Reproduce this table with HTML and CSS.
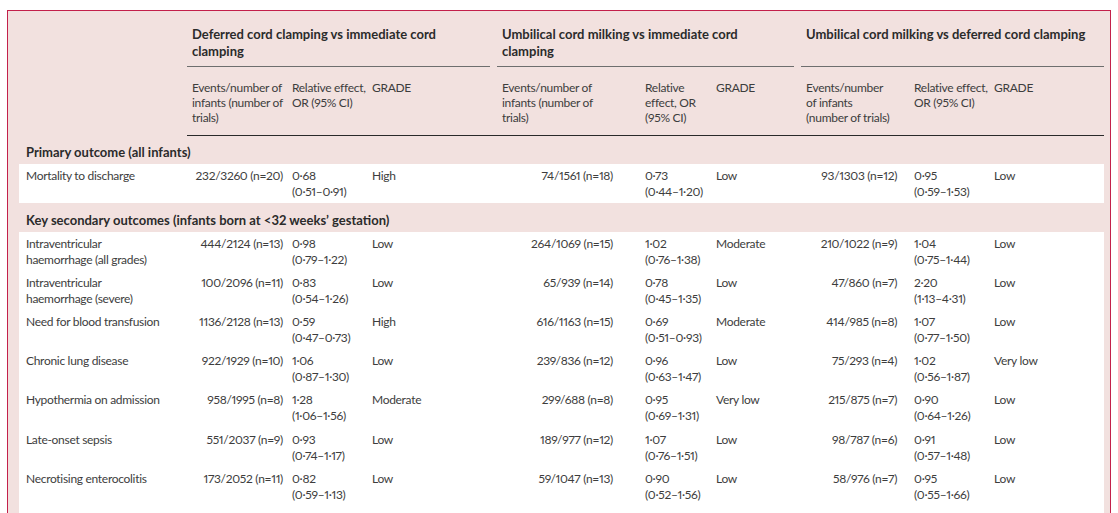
FILE: index.html
```html
<!DOCTYPE html>
<html lang="en">
<head>
<meta charset="utf-8">
<title>Cord management outcomes</title>
<link rel="stylesheet" href="styles.css">
</head>
<body>
<div class="frame">
<table class="tbl">
<colgroup>
<col class="c-label"><col class="c-g1e"><col class="c-g1r"><col class="c-g1g">
<col class="c-g2e"><col class="c-g2r"><col class="c-g2g">
<col class="c-g3e"><col class="c-g3r"><col class="c-g3g">
</colgroup>
<thead>
<tr class="grp-row">
<th rowspan="2" class="blank"></th>
<th colspan="3" class="grp"><div class="grp-title">Deferred cord clamping vs immediate cord<br>clamping</div></th>
<th colspan="3" class="grp"><div class="grp-title">Umbilical cord milking vs immediate cord<br>clamping</div></th>
<th colspan="3" class="grp grp-last"><div class="grp-title">Umbilical cord milking vs deferred cord clamping<br>&nbsp;</div></th>
</tr>
<tr class="sub-row">
<th>Events/number of<br>infants (number of<br>trials)</th>
<th>Relative effect,<br>OR (95% CI)</th>
<th>GRADE</th>
<th>Events/number of<br>infants (number of<br>trials)</th>
<th>Relative<br>effect, OR<br>(95% CI)</th>
<th>GRADE</th>
<th>Events/number<br>of infants<br>(number of trials)</th>
<th>Relative effect,<br>OR (95% CI)</th>
<th>GRADE</th>
</tr>
</thead>
<tbody>
<tr class="sec"><td colspan="10">Primary outcome (all infants)</td></tr>
<tr class="row">
<td class="lbl">Mortality to discharge</td>
<td class="n1">232/3260 (n=20)</td><td>0·68<br>(0·51–0·91)</td><td>High</td>
<td class="n2">74/1561 (n=18)</td><td>0·73<br>(0·44–1·20)</td><td>Low</td>
<td class="n3">93/1303 (n=12)</td><td>0·95<br>(0·59–1·53)</td><td>Low</td>
</tr>
<tr class="sec sec-2"><td colspan="10">Key secondary outcomes (infants born at &lt;32 weeks’ gestation)</td></tr>
<tr class="row">
<td class="lbl">Intraventricular<br>haemorrhage (all grades)</td>
<td class="n1">444/2124 (n=13)</td><td>0·98<br>(0·79–1·22)</td><td>Low</td>
<td class="n2">264/1069 (n=15)</td><td>1·02<br>(0·76–1·38)</td><td>Moderate</td>
<td class="n3">210/1022 (n=9)</td><td>1·04<br>(0·75–1·44)</td><td>Low</td>
</tr>
<tr class="row">
<td class="lbl">Intraventricular<br>haemorrhage (severe)</td>
<td class="n1">100/2096 (n=11)</td><td>0·83<br>(0·54–1·26)</td><td>Low</td>
<td class="n2">65/939 (n=14)</td><td>0·78<br>(0·45–1·35)</td><td>Low</td>
<td class="n3">47/860 (n=7)</td><td>2·20<br>(1·13–4·31)</td><td>Low</td>
</tr>
<tr class="row">
<td class="lbl">Need for blood transfusion</td>
<td class="n1">1136/2128 (n=13)</td><td>0·59<br>(0·47–0·73)</td><td>High</td>
<td class="n2">616/1163 (n=15)</td><td>0·69<br>(0·51–0·93)</td><td>Moderate</td>
<td class="n3">414/985 (n=8)</td><td>1·07<br>(0·77–1·50)</td><td>Low</td>
</tr>
<tr class="row">
<td class="lbl">Chronic lung disease</td>
<td class="n1">922/1929 (n=10)</td><td>1·06<br>(0·87–1·30)</td><td>Low</td>
<td class="n2">239/836 (n=12)</td><td>0·96<br>(0·63–1·47)</td><td>Low</td>
<td class="n3">75/293 (n=4)</td><td>1·02<br>(0·56–1·87)</td><td>Very low</td>
</tr>
<tr class="row">
<td class="lbl">Hypothermia on admission</td>
<td class="n1">958/1995 (n=8)</td><td>1·28<br>(1·06–1·56)</td><td>Moderate</td>
<td class="n2">299/688 (n=8)</td><td>0·95<br>(0·69–1·31)</td><td>Very low</td>
<td class="n3">215/875 (n=7)</td><td>0·90<br>(0·64–1·26)</td><td>Low</td>
</tr>
<tr class="row">
<td class="lbl">Late-onset sepsis</td>
<td class="n1">551/2037 (n=9)</td><td>0·93<br>(0·74–1·17)</td><td>Low</td>
<td class="n2">189/977 (n=12)</td><td>1·07<br>(0·76–1·51)</td><td>Low</td>
<td class="n3">98/787 (n=6)</td><td>0·91<br>(0·57–1·48)</td><td>Low</td>
</tr>
<tr class="row">
<td class="lbl">Necrotising enterocolitis</td>
<td class="n1">173/2052 (n=11)</td><td>0·82<br>(0·59–1·13)</td><td>Low</td>
<td class="n2">59/1047 (n=13)</td><td>0·90<br>(0·52–1·56)</td><td>Low</td>
<td class="n3">58/976 (n=7)</td><td>0·95<br>(0·55–1·66)</td><td>Low</td>
</tr>
<tr class="row">
<td class="lbl">Severe brain injury</td>
<td class="n1">88/1083 (n=8)</td><td>0·93<br>(0·65–1·32)</td><td>Low</td>
<td class="n2">43/568 (n=6)</td><td>1·16<br>(0·71–1·89)</td><td>Moderate</td>
<td class="n3">16/401 (n=3)</td><td>0·88<br>(0·41–1·90)</td><td>Low</td>
</tr>
</tbody>
</table>
</div>
</body>
</html>
```

FILE: styles.css
```css
html, body {
  margin: 0;
  padding: 0;
  background: #ffffff;
}

body {
  font-family: Lato, "Open Sans", "Liberation Sans", sans-serif;
  font-size: 12px;
  letter-spacing: -0.3px;
  font-feature-settings: "pnum" 1;
  color: #3d3d3d;
}

.frame {
  margin: 10px 0 0 7px;
  width: 1085px;
  padding: 0 6px 20px 11px;
  background: #f2e1df;
  border: 1px solid #c3204b;
  border-bottom: none;
}

.tbl {
  width: 1085px;
  border-collapse: collapse;
  border-spacing: 0;
  table-layout: fixed;
}

.c-label { width: 168px; }
.c-g1e { width: 100px; }
.c-g1r { width: 80px; }
.c-g1g { width: 130px; }
.c-g2e { width: 143px; }
.c-g2r { width: 71px; }
.c-g2g { width: 90px; }
.c-g3e { width: 108px; }
.c-g3r { width: 80px; }
.c-g3g { width: 115px; }

.tbl th,
.tbl td {
  text-align: left;
  vertical-align: top;
  font-weight: normal;
  white-space: nowrap;
  line-height: 16px;
  padding: 4px 5px 3.1px 5px;
}

.grp-row th.grp {
  padding: 15px 0 0 0;
}

.grp-title {
  margin-right: 7px;
  padding: 0 0 6px 5px;
  border-bottom: 1px solid #6e6e6e;
  font-weight: bold;
  font-size: 13px;
  letter-spacing: 0;
  color: #2b2b2b;
  line-height: 17px;
}

.grp-last .grp-title {
  margin-right: 0;
}

.sub-row th {
  padding: 13px 5px 10px 5px;
  line-height: 15px;
  border-bottom: 1px solid #2a2a2a;
}

.sec td {
  font-weight: bold;
  font-size: 13px;
  letter-spacing: 0;
  color: #2b2b2b;
  padding: 8px 7px 4px 7px;
}

.sec-2 td {
  padding-top: 9px;
}

.row td {
  background: #ffffff;
}

.row td.lbl {
  padding-left: 7px;
}

.row td.n1 {
  text-align: right;
  padding-right: 4px;
}

.row td.n2 {
  text-align: right;
  padding-right: 27px;
}

.row td.n3 {
  text-align: right;
  padding-right: 12px;
}
```
